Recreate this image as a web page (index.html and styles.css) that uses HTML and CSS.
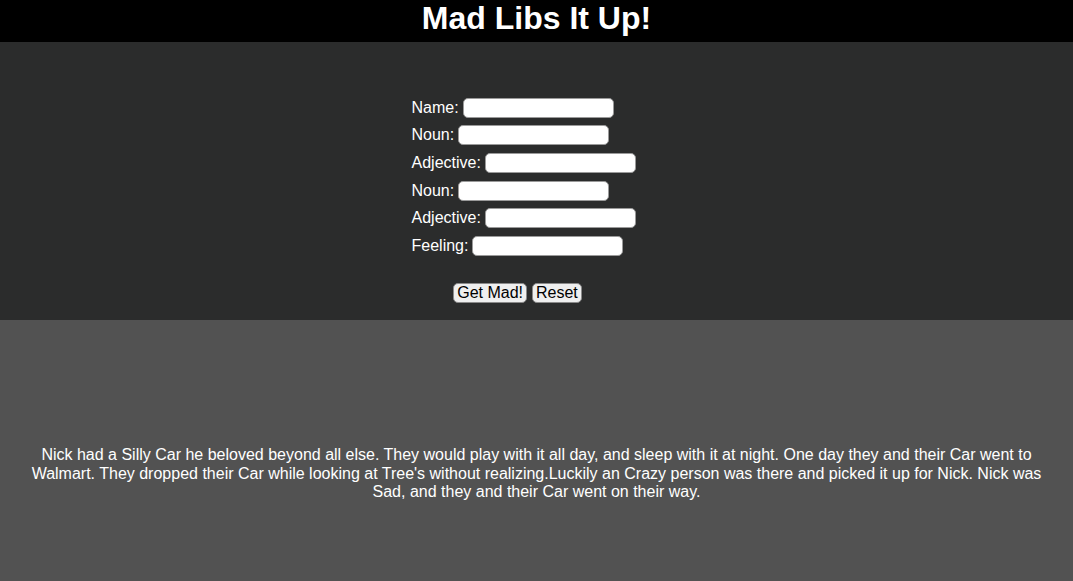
FILE: index.html
```html
<!DOCTYPE html>
<html>
<head>
<meta charset="utf-8">
<link rel="stylesheet" href="styles.css">
</head>
<body>
<header class="top">
  <h1 class="title">Mad Libs It Up!</h1>
</header>
<section class="form-area">
  <form class="form">
    <div class="row"><label>Name:</label> <input class="field" type="text"></div>
    <div class="row"><label>Noun:</label> <input class="field" type="text"></div>
    <div class="row"><label>Adjective:</label> <input class="field" type="text"></div>
    <div class="row"><label>Noun:</label> <input class="field" type="text"></div>
    <div class="row"><label>Adjective:</label> <input class="field" type="text"></div>
    <div class="row"><label>Feeling:</label> <input class="field" type="text"></div>
    <div class="buttons">
      <button type="button" class="btn">Get Mad!</button>
      <button type="button" class="btn">Reset</button>
    </div>
  </form>
</section>
<section class="story-area">
  <p class="story">Nick had a Silly Car he beloved beyond all else. They would play with it all day, and sleep with it at night. One day they and their Car went to Walmart. They dropped their Car while looking at Tree's without realizing.Luckily an Crazy person was there and picked it up for Nick. Nick was Sad, and they and their Car went on their way.</p>
</section>
</body>
</html>
```
FILE: styles.css
```css
html, body {
  margin: 0;
  padding: 0;
}
body {
  font-family: "Liberation Sans", Arial, sans-serif;
  font-size: 16px;
  color: #fff;
  background: #525252;
}
.top {
  background: #000;
  height: 42px;
  display: flex;
  align-items: flex-start;
  justify-content: center;
}
.title {
  margin: 0;
  font-size: 32px;
  font-weight: bold;
  line-height: 36px;
}
.form-area {
  background: #2b2c2c;
  height: 278px;
  box-sizing: border-box;
  padding-top: 52px;
  display: flex;
  justify-content: center;
}
.form {
  width: 250px;
}
.row {
  height: 27.6px;
  display: flex;
  align-items: center;
  gap: 4px;
}
.field {
  box-sizing: border-box;
  width: 151px;
  height: 20px;
  border: 1px solid #9a9a9a;
  border-radius: 5px;
  background: #fff;
  padding: 0 4px;
  margin: 0;
}
.buttons {
  width: 212px;
  display: flex;
  justify-content: center;
  gap: 5px;
  margin-top: 23px;
}
.btn {
  font-family: "Liberation Sans", Arial, sans-serif;
  font-size: 16px;
  color: #000;
  background: #efefef;
  border: 1px solid #8a8a8a;
  border-radius: 5px;
  padding: 0 3px;
  height: 20px;
  line-height: 18px;
}
.story-area {
  height: 261px;
  box-sizing: border-box;
  padding: 126px 28px 0;
}
.story {
  margin: 0;
  text-align: center;
  line-height: 18.5px;
}
```
